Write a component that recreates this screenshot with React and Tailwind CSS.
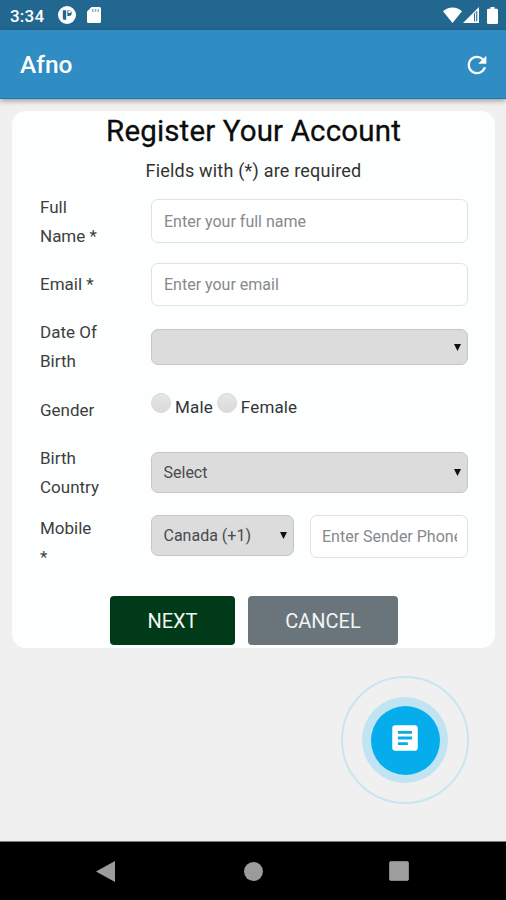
import React, { useState } from "react";
import clsx from "clsx";
import { MdArticle, MdRefresh } from "react-icons/md";

const StatusBar = () => (
  <div className="flex h-[30px] items-center bg-[#226790] pl-[10px] pr-[8px] text-white">
    <span className="w-12 pt-[2px] text-[17px] font-medium leading-[30px] tracking-[0.2px]">3:34</span>
    <svg className="h-[18px] w-[18px]" viewBox="0 0 18 18">
      <circle cx="9" cy="9" r="9" fill="#fff" />
      <path d="M4.800 4.200h3.400v9.600H6.300a1.500 1.500 0 0 1-1.500-1.500z" fill="#226790" />
      <path d="M9.400 4.200h1.400a2.900 2.900 0 0 1 0 5.800H9.400z" fill="#226790" />
      <circle cx="11.500" cy="5.800" r="1.400" fill="#fff" />
    </svg>
    <svg className="ml-[11px] h-4 w-[14px]" viewBox="0 0 14 16">
      <path d="M4.500 0H12.500A1.500 1.500 0 0 1 14 1.500V14.500A1.500 1.500 0 0 1 12.500 16H1.500A1.500 1.500 0 0 1 0 14.500V4.500z" fill="#fff" />
      <path d="M5 2h1.500v3H5zM7.800 2h1.500v3H7.800zM10.600 2h1.400v3h-1.400z" fill="#8fb0c5" />
    </svg>
    <div className="ml-auto flex items-center">
      <svg className="h-4 w-[19px]" viewBox="0 0 19 16">
        <path d="M9.500 16L0 4.200Q4 .4 9.500 .4T19 4.200z" fill="#fff" />
      </svg>
      <svg className="ml-[1px] h-4 w-4" viewBox="0 0 16 16">
        <path fillRule="evenodd" d="M16 0V16H0zM11 6.500V14.300H14.300V3.700z" fill="#fff" />
        <path d="M12 6v8h1.200V5z" fill="#fff" />
      </svg>
      <svg className="ml-[8px] h-[17px] w-[11px]" viewBox="0 0 11 17">
        <path d="M3.500 0h4v1.700H9.700A1.300 1.300 0 0 1 11 3V15.700A1.300 1.300 0 0 1 9.700 17H1.300A1.300 1.300 0 0 1 0 15.700V3A1.300 1.300 0 0 1 1.300 1.700H3.500z" fill="#fff" />
      </svg>
    </div>
  </div>
);

const AppBar = () => (
  <header className="flex h-[69px] items-center justify-between border-b border-[#1b79b4] bg-[#2f8dc3] pl-5 pr-[15px] text-white shadow-[0_2px_5px_rgba(0,0,0,0.35)]">
    <h1 className="pt-[3px] text-[24.5px] font-medium">Afno</h1>
    <button aria-label="Refresh" className="pt-[1px]"><MdRefresh className="h-7 w-7" /></button>
  </header>
);

const Row = ({ label, className, children }) => (
  <div className={clsx("flex items-start", className)}>
    <div className="w-[111px] shrink-0 pr-[50px] pt-[1px] text-[17px] leading-[29px] text-[#3c3f42]">
      {label}
    </div>
    {children}
  </div>
);

const TextInput = ({ className, ...props }) => (
  <input
    className={clsx(
      "min-w-0 rounded-[7px] border border-[#dfe2e3] bg-white px-[12px] text-[16px] text-[#495057] outline-none placeholder:text-[#858a8e]",
      className
    )}
    {...props}
  />
);

const Select = ({ value, className }) => (
  <button
    type="button"
    className={clsx(
      "flex items-center justify-between rounded-[7px] border border-[#c6c6c6] bg-[#dcdcdc] pl-[11.5px] pr-[6px] text-[16px] text-[#484b4e]",
      className
    )}
  >
    <span>{value}</span>
    <svg className="h-[7px] w-[7px]" viewBox="0 0 7 7"><path d="M0 0h7L3.500 7z" fill="#111" /></svg>
  </button>
);

const Radio = ({ label, checked, onChange }) => (
  <label className="flex text-[17px] tracking-[0.15px] text-[#333639]">
    <input
      type="radio"
      name="gender"
      checked={checked}
      onChange={onChange}
      className="mr-1 h-5 w-5 appearance-none rounded-full border border-[#d8d8d8] bg-linear-to-b from-[#e6e6e6] to-[#dadada] checked:border-[6px] checked:border-[#2f8dc3]"
    />
    <span className="pt-[2px] leading-[24px]">{label}</span>
  </label>
);

const RegisterForm = () => {
  const [gender, setGender] = useState("");

  return (
    <form className="ml-[12px] mt-3 h-[537px] w-[483px] rounded-[14px] bg-[#fdfefe] pl-[28px]">
      <h2 className="-ml-[28px] pt-[3px] text-center text-[29.5px] leading-[34px] tracking-[0.15px] text-[#0c0c0c] [-webkit-text-stroke:0.3px_#0c0c0c]">
        Register Your Account
      </h2>
      <p className="-ml-[28px] mt-[9px] text-center text-[18px] leading-[28px] tracking-[0.2px] text-[#333]">
        Fields with (*) are required
      </p>

      <Row label="Full Name *" className="mt-[7px] h-[77px]">
        <TextInput placeholder="Enter your full name" className="mt-[7px] h-[44px] w-[317px]" />
      </Row>
      <Row label="Email *" className="h-[48px]">
        <TextInput placeholder="Enter your email" className="-mt-[6px] h-[43px] w-[317px]" />
      </Row>
      <Row label="Date Of Birth" className="h-[78px]">
        <Select className="mt-[12px] h-[36px] w-[317px]" />
      </Row>
      <Row label="Gender" className="h-[48px]">
        <div className="-mt-[2px] flex gap-1">
          <Radio label="Male" checked={gender === "male"} onChange={() => setGender("male")} />
          <Radio label="Female" checked={gender === "female"} onChange={() => setGender("female")} />
        </div>
      </Row>
      <Row label="Birth Country" className="h-[70px]">
        <Select value="Select" className="mt-[9px] h-[41px] w-[317px]" />
      </Row>
      <Row label="Mobile *" className="h-[83px]">
        <Select value="Canada (+1)" className="mt-[2px] h-[41px] w-[143px]" />
        <TextInput placeholder="Enter Sender Phone" className="ml-4 mt-[2px] h-[43px] w-[158px] pl-[11px] pr-[10px]" />
      </Row>

      <div className="ml-[70px] flex gap-[13px] text-[20px] text-[#f1f5f3]">
        <button type="button" className="h-[49px] w-[125px] rounded-[4px] bg-[#003a19]">NEXT</button>
        <button type="button" className="h-[49px] w-[150px] rounded-[4px] bg-[#69747b]">CANCEL</button>
      </div>
    </form>
  );
};

const ChatButton = () => (
  <button
    aria-label="Chat"
    className="ml-[341px] mt-[28px] flex h-[128px] w-[128px] items-center justify-center rounded-full border-2 border-[#c9e6f0]"
  >
    <span className="flex h-[86px] w-[86px] items-center justify-center rounded-full bg-[#c0e4f1]">
      <span className="flex h-[69px] w-[69px] items-center justify-center rounded-full bg-[#06adec] text-white">
        <MdArticle className="h-[34px] w-[34px] -translate-y-[2px]" />
      </span>
    </span>
  </button>
);

const NavBar = () => (
  <nav className="mt-auto flex h-[59px] items-center border-t border-[#777] bg-black pl-[96px]">
    <svg className="h-[21px] w-[19px]" viewBox="0 0 19 21"><path d="M0 10.500L19 0V21z" fill="#9b9b9b" /></svg>
    <div className="ml-[129px] h-[19px] w-[19px] rounded-full bg-[#9b9b9b]" />
    <div className="ml-[126px] h-[20px] w-[20px] rounded-[2px] border border-[#858585] bg-[#9e9e9e]" />
  </nav>
);

const App = () => {
  return (
    <div className="flex h-[900px] w-[506px] flex-col overflow-hidden bg-[#f0f0f0] font-['Roboto',sans-serif]">
      <StatusBar />
      <AppBar />
      <RegisterForm />
      <ChatButton />
      <NavBar />
    </div>
  );
};

export default App;
